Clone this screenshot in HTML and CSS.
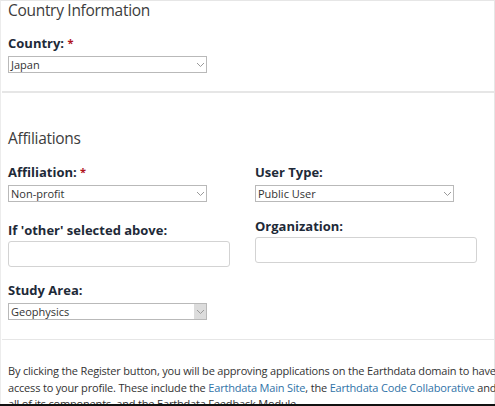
FILE: index.html
```html
<!DOCTYPE html>
<html lang="en">
<head>
<meta charset="utf-8">
<link rel="stylesheet" href="styles.css">
</head>
<body>
<div class="panel">
  <section class="sec sec-country">
    <h2 class="heading">Country Information</h2>
    <div class="field">
      <div class="label">Country: <span class="req">*</span></div>
      <div class="select"><span class="val">Japan</span><span class="arrow"><svg width="9" height="6" viewBox="0 0 9 6"><path d="M1 1 L4.5 4.5 L8 1" fill="none" stroke="#9a9a9a" stroke-width="1"/></svg></span></div>
    </div>
  </section>
  <div class="rule thick"></div>
  <section class="sec sec-aff">
    <h2 class="heading">Affiliations</h2>
    <div class="grid">
      <div class="col">
        <div class="label">Affiliation: <span class="req">*</span></div>
        <div class="select"><span class="val">Non-profit</span><span class="arrow"><svg width="9" height="6" viewBox="0 0 9 6"><path d="M1 1 L4.5 4.5 L8 1" fill="none" stroke="#9a9a9a" stroke-width="1"/></svg></span></div>
        <div class="label l-other">If 'other' selected above:</div>
        <div class="input"></div>
        <div class="label l-study">Study Area:</div>
        <div class="select"><span class="val">Geophysics</span><span class="arrow hover"><svg width="9" height="6" viewBox="0 0 9 6"><path d="M1 1 L4.5 4.5 L8 1" fill="none" stroke="#9a9a9a" stroke-width="1"/></svg></span></div>
      </div>
      <div class="col">
        <div class="label">User Type:</div>
        <div class="select"><span class="val">Public User</span><span class="arrow"><svg width="9" height="6" viewBox="0 0 9 6"><path d="M1 1 L4.5 4.5 L8 1" fill="none" stroke="#9a9a9a" stroke-width="1"/></svg></span></div>
        <div class="label l-org">Organization:</div>
        <div class="input"></div>
      </div>
    </div>
  </section>
  <div class="rule thin"></div>
  <section class="sec sec-text">
    <p class="notice">By clicking the Register button, you will be approving applications on the Earthdata domain to have<br>access to your profile. These include the <a href="#">Earthdata Main Site</a>, the <a href="#">Earthdata Code Collaborative</a> and<br>all of its components, and the Earthdata Feedback Module.</p>
  </section>
</div>
<div class="edge"></div>
</body>
</html>
```

FILE: styles.css
```css
html, body {
  margin: 0;
  padding: 0;
  background: #ffffff;
  overflow: hidden;
  height: 406px;
}
body {
  font-family: "Open Sans", "Liberation Sans", sans-serif;
  color: #333333;
}
.panel {
  width: 493px;
  border-top: 1px solid #e6e6e6;
  border-left: 1px solid #ececec;
  border-right: 1px solid #e6e6e6;
  min-height: 420px;
}
.sec {
  padding: 0 7px;
}
.heading {
  margin: 0;
  padding-top: 1px;
  font-size: 15.5px;
  letter-spacing: -0.3px;
  line-height: 17px;
  font-weight: 400;
  color: #3c3c3c;
}
.label {
  font-size: 13px;
  line-height: 18px;
  font-weight: 700;
  color: #1e2a38;
  margin-bottom: 4px;
}
.req {
  color: #b0141c;
  font-size: 11px;
  vertical-align: 1px;
}
.sec-country .field {
  margin-top: 15px;
}
.select {
  box-sizing: border-box;
  width: 199px;
  height: 17px;
  border: 1px solid #b9b9b9;
  display: flex;
  align-items: center;
  justify-content: space-between;
  background: #fff;
}
.val {
  font-size: 11px;
  line-height: 15px;
  padding-left: 2px;
  color: #333;
}
.arrow {
  width: 12px;
  height: 15px;
  display: flex;
  align-items: center;
  justify-content: center;
}
.arrow.hover {
  background: #dcdcdc;
}
.rule {
  background: #e6e6e6;
  margin: 0 0 0 1px;
}
.rule.thick {
  height: 2px;
  margin-top: 18px;
}
.rule.thin {
  height: 1px;
  margin-top: 19px;
}
.sec-aff {
  padding-top: 36px;
}
.grid {
  display: grid;
  grid-template-columns: 247px 1fr;
  margin-top: 16px;
}
.input {
  box-sizing: border-box;
  width: 222px;
  height: 26px;
  border: 1px solid #d3d3d3;
  border-radius: 3px;
  background: #fff;
}
.l-other {
  margin-top: 19px;
  margin-bottom: 2px;
}
.l-study {
  margin-top: 14px;
  margin-bottom: 4px;
}
.l-org {
  margin-top: 15px;
  margin-bottom: 2px;
}
.sec-text {
  padding: 23px 0 0 7px;
}
.notice {
  margin: 0;
  font-size: 11px;
  letter-spacing: -0.18px;
  line-height: 16.5px;
  white-space: nowrap;
  color: #333;
}
.notice a {
  color: #2f73a8;
  text-decoration: none;
}
.edge {
  position: fixed;
  left: 0;
  right: 0;
  bottom: 0;
  height: 2px;
  background: #111;
}
```
